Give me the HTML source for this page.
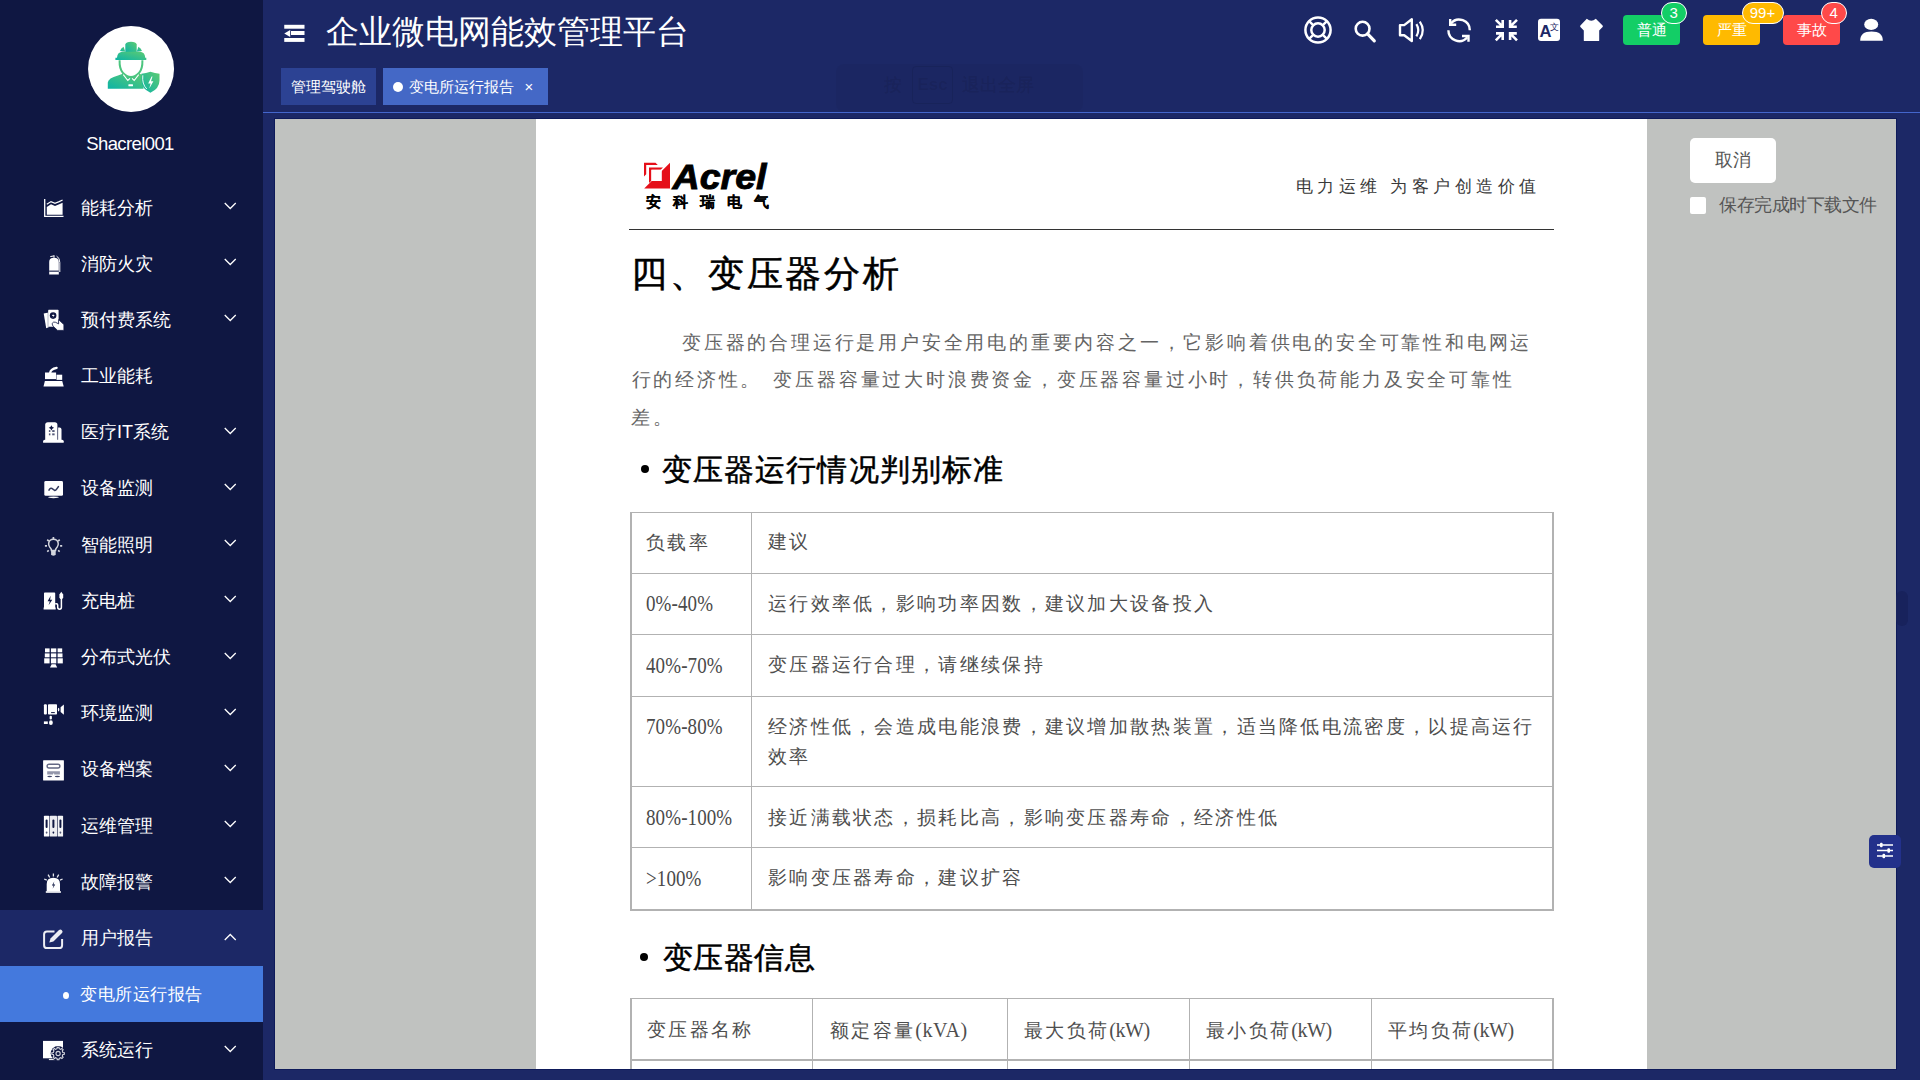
<!DOCTYPE html>
<html><head><meta charset="utf-8">
<style>
*{margin:0;padding:0;box-sizing:border-box}
html,body{width:1920px;height:1080px;overflow:hidden;background:#1c2866;font-family:"Liberation Sans",sans-serif}
.abs{position:absolute}
#side{position:absolute;left:0;top:0;width:263px;height:1080px;background:#0f1742}
#avatar{left:88px;top:26px;width:86px;height:86px;border-radius:50%;background:#fff}
#uname{left:-1.5px;top:133.5px;width:263px;text-align:center;color:#fff;font-size:18.5px;letter-spacing:-0.6px;line-height:20px}
.mi{position:absolute;left:0;width:263px;height:56px;color:#fff;font-size:18px}
.mi .t{position:absolute;left:81px;top:0;line-height:56px;white-space:nowrap}
.mi .ic{position:absolute;left:44px;top:19.5px;width:20px;height:18px;overflow:visible}
.mi .ch{position:absolute;left:224px;top:22.6px;width:12.5px;height:8px}
.mi.act{background:#1c2866}
.mi.sub{background:#4479dd}
.mi .dot{position:absolute;left:63.3px;top:25.8px;width:5.9px;height:7px;border-radius:50%;background:#fff}
.mi.sub .t{font-size:17px;letter-spacing:0.55px;top:0.8px}
#header{left:263px;top:0;width:1657px;height:112px;background:#1c2866}
#hline{left:263px;top:112px;width:1657px;height:1px;background:#4466cc}
#title{left:326px;top:8px;color:#fff;font-size:33px;line-height:48px;white-space:nowrap}
.tab{position:absolute;top:68px;height:37px;color:#fff;font-size:15px;line-height:37px;white-space:nowrap}
#frame{left:274px;top:118px;width:1623px;height:952px;background:#0e1a5a}
#gray{left:275px;top:119px;width:1621px;height:950px;background:#c0c2c0}
#page{left:536px;top:119px;width:1111px;height:950px;background:#fff;overflow:hidden}
.doc{font-family:"Liberation Serif",serif;color:#222}
.tx{position:absolute;white-space:nowrap;line-height:1}
.asc{letter-spacing:0.6px;font-size:20px}
.asc.kw{letter-spacing:-0.4px}
.btn{position:absolute;height:30px;top:15px;border-radius:4px;color:#fff;font-size:15px;line-height:30px;text-align:center}
.badge{position:absolute;top:2px;height:21.5px;border-radius:11px;border:1px solid #fff;color:#fff;font-size:15px;line-height:19.5px;text-align:center}
</style></head><body>
<div id="side">
  
  <div id="uname" class="abs">Shacrel001</div>
<div class="mi" style="top:179.50px"><svg class="ic" viewBox="0 0 20 18"><path d="M0.7 0V17.3H19.5" stroke="#fff" stroke-width="1.3" fill="none"/><path d="M2.8 5.2L7 2.6L11 4.3L15.2 2.6L18.6 1" stroke="#fff" stroke-width="1.2" fill="none"/><path d="M2.8 15.8V8L7 5.3L11 7L15.2 5.3L18.6 3.8V15.8Z" fill="#fff"/></svg><span class="t">能耗分析</span><svg class="ch" viewBox="0 0 12 8"><path d="M0.5 1L6 6.5L11.5 1" stroke="#fff" stroke-width="1.3" fill="none"/></svg></div>
<div class="mi" style="top:235.69px"><svg class="ic" viewBox="0 0 20 18"><path d="M5.2 7Q5.2 2.8 10 2.8Q14.8 2.8 14.8 7V19.6H5.2Z" fill="#fff"/><rect x="5.2" y="15.6" width="9.6" height="1.1" fill="#0f1742"/><path d="M10 2.8V0.6M10.4 0.8L6.3 1.6M12.6 1.2Q15.8 2.6 15.8 7.5V17" stroke="#fff" stroke-width="1" fill="none"/></svg><span class="t">消防火灾</span><svg class="ch" viewBox="0 0 12 8"><path d="M0.5 1L6 6.5L11.5 1" stroke="#fff" stroke-width="1.3" fill="none"/></svg></div>
<div class="mi" style="top:291.88px"><svg class="ic" viewBox="0 0 20 18"><path d="M-0.3 2.6L4.6 1.6V16.2L2.2 17.3Z" fill="#fff"/><rect x="4" y="-1.3" width="10.6" height="17" rx="0.8" fill="#fff"/><path d="M4 -1.3V15.7" stroke="#0f1742" stroke-width="0.6" opacity="0.5"/><circle cx="9.1" cy="4.6" r="3.3" fill="#0f1742"/><path d="M9.8 2.3L7.8 5.1H9.4L8.5 7.1L10.7 4.1H9.1Z" fill="#fff"/><path d="M8 12.6Q9.6 10.2 11.6 11.3L14.6 12.9V8.6L19.9 13.6V19.4H13.6L9 15.2Z" fill="#fff" stroke="#0f1742" stroke-width="0.8"/></svg><span class="t">预付费系统</span><svg class="ch" viewBox="0 0 12 8"><path d="M0.5 1L6 6.5L11.5 1" stroke="#fff" stroke-width="1.3" fill="none"/></svg></div>
<div class="mi" style="top:348.07px"><svg class="ic" viewBox="0 0 20 18"><path d="M6.2 4.6Q6.6 1 12.6 -0.2" stroke="#fff" stroke-width="2.3" stroke-linecap="round" fill="none"/><rect x="1" y="4.5" width="11.1" height="6.6" fill="#fff"/><rect x="12.5" y="6.7" width="5.7" height="5.2" fill="#fff"/><path d="M0.9 13.1H18.2L19.7 18.4H-0.5Z" fill="#fff"/></svg><span class="t">工业能耗</span></div>
<div class="mi" style="top:404.26px"><svg class="ic" viewBox="0 0 20 18"><path d="M1.2 16.4V0.8Q1.2 -1.8 3.8 -1.8H10.8Q13.4 -1.8 13.4 0.8V16.4Z" fill="#fff"/><path d="M14.1 16.4V3.5H15.6Q17.5 3.5 17.5 5.4V16.4Z" fill="#fff"/><path d="M-0.9 17.2Q-0.9 15.7 0.8 15.7H18.1Q19.7 15.7 19.7 17.2V18.8H-0.9Z" fill="#fff"/><path d="M7.4 1.2L8.4 2.9L10.1 3.8L8.4 4.7L7.4 6.4L6.4 4.7L4.7 3.8L6.4 2.9Z" fill="#0f1742"/><g fill="#0f1742" opacity="0.7"><rect x="4.9" y="6.1" width="1.5" height="1.9"/><rect x="8.2" y="6.1" width="2.4" height="1.9"/><rect x="4.9" y="9.4" width="1.5" height="1.9"/><rect x="8.2" y="9.4" width="2.4" height="1.9"/></g></svg><span class="t">医疗IT系统</span><svg class="ch" viewBox="0 0 12 8"><path d="M0.5 1L6 6.5L11.5 1" stroke="#fff" stroke-width="1.3" fill="none"/></svg></div>
<div class="mi" style="top:460.45px"><svg class="ic" viewBox="0 0 20 18"><rect x="0.3" y="1" width="18.7" height="14.8" rx="1.4" fill="#fff"/><ellipse cx="9.5" cy="17.35" rx="5.4" ry="0.8" fill="#fff"/><path d="M5 10.1Q6.5 7.6 7.8 8.4L10.6 10.4Q11.8 10.8 14.4 6.6" stroke="#0f1742" stroke-width="1.6" stroke-linecap="round" fill="none" opacity="0.85"/></svg><span class="t">设备监测</span><svg class="ch" viewBox="0 0 12 8"><path d="M0.5 1L6 6.5L11.5 1" stroke="#fff" stroke-width="1.3" fill="none"/></svg></div>
<div class="mi" style="top:516.64px"><svg class="ic" viewBox="0 0 20 18"><g opacity="0.82"><path d="M7.4 14.6Q7.4 12.8 5.7 11Q4.3 9.4 4.7 7.2Q5.4 3.3 9.45 3.3Q13.5 3.3 14.2 7.2Q14.6 9.4 13.2 11Q11.5 12.8 11.5 14.6Z" stroke="#fff" stroke-width="1.5" fill="none"/><path d="M7.1 15H11.7V18.3Q11.7 19.7 9.4 19.7Q7.1 19.7 7.1 18.3Z" fill="#fff"/><path d="M9.4 0.9V3M3.2 3.7L4.8 5.2M15.7 3.7L14.1 5.2M0.9 9.9H3M16.1 9.9H18.2M3.2 15.6L4.8 14.4M15.7 15.6L14.1 14.4" stroke="#fff" stroke-width="1.7"/></g></svg><span class="t">智能照明</span><svg class="ch" viewBox="0 0 12 8"><path d="M0.5 1L6 6.5L11.5 1" stroke="#fff" stroke-width="1.3" fill="none"/></svg></div>
<div class="mi" style="top:572.83px"><svg class="ic" viewBox="0 0 20 18"><path d="M0 1.3Q0 0.5 0.8 0.5H10.4Q11.2 0.5 11.2 1.3V15.6H11.7V17.5H-0.4V15.6H0Z" fill="#fff"/><path d="M6.7 3.8L3.6 9.2H5.8L4.6 13.2L8.3 7.7H6.1Z" fill="#0f1742"/><path d="M11.2 11.7H12.5Q13.7 11.7 13.7 13V15.3Q13.7 17.2 15.6 17.2Q17.4 17.2 17.4 15.3V6.5" stroke="#fff" stroke-width="1.5" fill="none"/><path d="M17.3 -0.2L19.2 2.6V5.8L18.2 7H16.4L15.4 5.8V2.6Z" fill="#fff"/></svg><span class="t">充电桩</span><svg class="ch" viewBox="0 0 12 8"><path d="M0.5 1L6 6.5L11.5 1" stroke="#fff" stroke-width="1.3" fill="none"/></svg></div>
<div class="mi" style="top:629.02px"><svg class="ic" viewBox="0 0 20 18"><g fill="#fff"><rect x="1" y="-0.6" width="4.6" height="3.9"/><rect x="6.9" y="-0.6" width="5.4" height="3.9"/><rect x="13.6" y="-0.6" width="4.6" height="3.9"/><rect x="0.8" y="4.4" width="4.8" height="3.9"/><rect x="6.9" y="4.4" width="5.4" height="3.9"/><rect x="13.6" y="4.4" width="4.9" height="3.9"/><rect x="0.2" y="9.3" width="5.4" height="5.1"/><rect x="6.9" y="9.3" width="5.4" height="5.1"/><rect x="13.6" y="9.3" width="5.2" height="5.1"/><path d="M7.6 15.3H11.6L13.2 18.5H6Z"/></g></svg><span class="t">分布式光伏</span><svg class="ch" viewBox="0 0 12 8"><path d="M0.5 1L6 6.5L11.5 1" stroke="#fff" stroke-width="1.3" fill="none"/></svg></div>
<div class="mi" style="top:685.21px"><svg class="ic" viewBox="0 0 20 18"><rect x="-0.1" y="-0.8" width="3" height="10.4" rx="1" fill="#fff"/><rect x="4" y="-0.8" width="9" height="10.4" rx="0.8" fill="#fff"/><rect x="7.1" y="7.1" width="3.7" height="1" fill="#0f1742"/><ellipse cx="14.6" cy="4.6" rx="0.7" ry="1.9" fill="#fff"/><path d="M16.6 2.2L19.9 -0.6V9.8L16.6 7Z" fill="#fff"/><rect x="5.6" y="10.7" width="2.3" height="3.7" rx="1" fill="#fff"/><ellipse cx="6.9" cy="17.7" rx="1.9" ry="2.4" fill="#fff"/><rect x="-0.1" y="16.4" width="3.9" height="2.6" fill="#fff"/></svg><span class="t">环境监测</span><svg class="ch" viewBox="0 0 12 8"><path d="M0.5 1L6 6.5L11.5 1" stroke="#fff" stroke-width="1.3" fill="none"/></svg></div>
<div class="mi" style="top:741.40px"><svg class="ic" viewBox="0 0 20 18"><rect x="-0.9" y="-0.8" width="20.8" height="20.4" rx="0.6" fill="#fff"/><rect x="3.1" y="3.2" width="12.8" height="3.8" rx="1.9" fill="none" stroke="#0f1742" stroke-width="1.4" opacity="0.65"/><path d="M3.2 10.3H15.9V13.6H10.2V12.4H9V13.6H3.2Z" fill="#0f1742" opacity="0.45"/><ellipse cx="5.7" cy="15.5" rx="2.4" ry="0.7" fill="#0f1742" opacity="0.8"/><ellipse cx="13.4" cy="15.5" rx="2.6" ry="0.7" fill="#0f1742" opacity="0.8"/></svg><span class="t">设备档案</span><svg class="ch" viewBox="0 0 12 8"><path d="M0.5 1L6 6.5L11.5 1" stroke="#fff" stroke-width="1.3" fill="none"/></svg></div>
<div class="mi" style="top:797.59px"><svg class="ic" viewBox="0 0 20 18"><rect x="-0.1" y="-1.2" width="5.4" height="20.8" rx="0.7" fill="#fff"/><rect x="5.8" y="-1.2" width="7.2" height="20.8" rx="0.7" fill="#fff" opacity="0.92"/><rect x="13.6" y="-1.2" width="5.5" height="20.8" rx="0.7" fill="#fff" opacity="0.95"/><g fill="#0f1742"><rect x="1.6" y="2.6" width="2" height="8.5" rx="1"/><rect x="8.4" y="2.6" width="2" height="8.5" rx="1"/><rect x="15.4" y="2.6" width="2" height="8.5" rx="1"/><ellipse cx="2.6" cy="15.6" rx="0.9" ry="1.1" opacity="0.7"/><ellipse cx="9.4" cy="15.6" rx="0.9" ry="1.1"/><ellipse cx="16.4" cy="15.6" rx="0.9" ry="1.1" opacity="0.7"/></g></svg><span class="t">运维管理</span><svg class="ch" viewBox="0 0 12 8"><path d="M0.5 1L6 6.5L11.5 1" stroke="#fff" stroke-width="1.3" fill="none"/></svg></div>
<div class="mi" style="top:853.78px"><svg class="ic" viewBox="0 0 20 18"><path d="M2.7 18.5V11Q2.7 4.7 9.35 4.7Q16 4.7 16 11V18.5Z" fill="#fff"/><rect x="1.8" y="18.2" width="15.1" height="1.6" fill="#fff"/><path d="M10.3 8.6L7.9 12.6H9.6L8.6 15.8L11.2 11.5H9.5Z" fill="#0f1742"/><path d="M9.4 0.4V3.4M4.1 1.6L5.7 4.5M14.7 1.6L13.1 4.5M0.2 6L2.8 7.1M18.6 6L16 7.1" stroke="#fff" stroke-width="1.3" opacity="0.9"/></svg><span class="t">故障报警</span><svg class="ch" viewBox="0 0 12 8"><path d="M0.5 1L6 6.5L11.5 1" stroke="#fff" stroke-width="1.3" fill="none"/></svg></div>
<div class="mi act" style="top:909.97px"><svg class="ic" viewBox="0 0 20 18"><path d="M10.5 2.4H3Q0.1 2.4 0.1 5.3V16.2Q0.1 19.1 3 19.1H15.2Q18.1 19.1 18.1 16.2V10" stroke="#fff" stroke-width="2" fill="none" opacity="0.92"/><path d="M5.3 13.6L6.5 9.6L15 1.1Q16.4 -0.2 17.9 1.2Q19.3 2.6 18 4L9.4 12.5Z" fill="#fff" opacity="0.92"/></svg><span class="t">用户报告</span><svg class="ch" viewBox="0 0 12 8"><path d="M0.5 7L6 1.5L11.5 7" stroke="#fff" stroke-width="1.3" fill="none"/></svg></div>
<div class="mi sub" style="top:966.16px"><span class="dot"></span><span class="t" style="left:80px">变电所运行报告</span></div>
<div class="mi" style="top:1022.35px"><svg class="ic" viewBox="0 0 20 18"><rect x="-1" y="-1.1" width="20" height="17.4" fill="#fff"/><rect x="4.9" y="16.9" width="7.4" height="1.2" fill="#fff" opacity="0.9"/><circle cx="14.1" cy="11.5" r="7.4" fill="#0f1742"/><path d="M18.88 10.43 L20.34 10.62 L20.34 12.38 L18.88 12.57 L18.24 14.13 L19.13 15.29 L17.89 16.53 L16.73 15.64 L15.17 16.28 L14.98 17.74 L13.22 17.74 L13.03 16.28 L11.47 15.64 L10.31 16.53 L9.07 15.29 L9.96 14.13 L9.32 12.57 L7.86 12.38 L7.86 10.62 L9.32 10.43 L9.96 8.87 L9.07 7.71 L10.31 6.47 L11.47 7.36 L13.03 6.72 L13.22 5.26 L14.98 5.26 L15.17 6.72 L16.73 7.36 L17.89 6.47 L19.13 7.71 L18.24 8.87Z" fill="none" stroke="#fff" stroke-width="1.1" opacity="0.85"/><circle cx="14.1" cy="11.5" r="2.1" fill="none" stroke="#fff" stroke-width="1.1" opacity="0.8"/></svg><span class="t">系统运行</span><svg class="ch" viewBox="0 0 12 8"><path d="M0.5 1L6 6.5L11.5 1" stroke="#fff" stroke-width="1.3" fill="none"/></svg></div>
</div>
<div id="header" class="abs"></div>
<div id="hline" class="abs"></div>
<div id="title" class="abs">企业微电网能效管理平台</div>
<div class="tab" style="left:281px;width:95px;background:#2c4293;padding-left:10px">管理驾驶舱</div>
<div class="tab" style="left:383px;width:165px;background:#4468c6;padding-left:26px">变电所运行报告<span style="position:absolute;left:10px;top:13.8px;width:10.3px;height:10.3px;border-radius:50%;background:#fff"></span><span style="position:absolute;left:141.5px;top:0.3px;font-size:15px">×</span></div>
<svg class="abs" style="left:278px;top:18px" width="32" height="30" viewBox="278 18 32 30">
<rect x="284.25" y="24.8" width="20.25" height="3.9" fill="#fff"/>
<path d="M284.25 33.4L290.2 29.9V36.9Z" fill="#fff"/>
<rect x="291" y="31" width="13.5" height="4" fill="#fff"/>
<rect x="284.25" y="38" width="20.25" height="3.9" fill="#fff"/>
</svg>
<svg class="abs" style="left:1290px;top:0" width="630" height="60" viewBox="1290 0 630 60">
<g stroke="#fff" fill="none">
 <circle cx="1318" cy="30" r="12.6" stroke-width="2.5"/>
 <circle cx="1318" cy="30" r="6.7" stroke-width="2.5"/>
 <path d="M1309.6 21.6L1313.2 25.2M1326.4 21.6L1322.8 25.2M1309.6 38.4L1313.2 34.8M1326.4 38.4L1322.8 34.8" stroke-width="2.4"/>
 <circle cx="1362.6" cy="28.7" r="6.9" stroke-width="2.6"/>
 <path d="M1367.6 33.8L1374.3 40.8" stroke-width="3.2" stroke-linecap="round"/>
 <path d="M1400 25.1H1404.2L1411.8 19.3V41L1404.2 35.2H1400Z" stroke-width="2.4" stroke-linejoin="round"/>
 <path d="M1416.4 24.2Q1420.2 30.2 1416.4 36.4" stroke-width="2.2"/>
 <path d="M1419.8 21.6Q1425.8 30.2 1419.8 39.2" stroke-width="2.2"/>
 <path d="M1450.9 23.4A10.7 10.7 0 0 1 1469.8 30.3" stroke-width="2.4"/>
 <path d="M1467.3 37.2A10.7 10.7 0 0 1 1448.4 30.3" stroke-width="2.4"/>
 <path d="M1450.2 19V24.8H1456.2" stroke-width="2.4"/>
 <path d="M1462 36H1468.5V41.7" stroke-width="2.4"/>
 <g stroke-width="2.6">
 <path d="M1495.8 19.8L1502.2 26.2M1496 26.7H1502.7V20"/>
 <path d="M1517 19.8L1510.6 26.2M1516.8 26.7H1510.1V20"/>
 <path d="M1495.8 40.3L1502.2 33.9M1496 33.4H1502.7V40.1"/>
 <path d="M1517 40.3L1510.6 33.9M1516.8 33.4H1510.1V40.1"/>
 </g>
</g>
<rect x="1538" y="18.8" width="22" height="22.2" rx="3" fill="#fff"/>
<text x="1539.4" y="37" font-family="Liberation Sans" font-weight="bold" font-size="16.6" fill="#1c2866">A</text>
<text x="1550.3" y="30.4" font-size="8.5" fill="#1c2866">文</text>
<path d="M1586.8 18.8Q1591.3 22.8 1595.8 18.8L1602.6 25.5Q1603.2 26.3 1602.6 27L1599.2 30.6V40.4Q1599.2 41 1598.6 41H1584.4Q1583.8 41 1583.8 40.4V30.6L1580.4 27Q1579.8 26.3 1580.4 25.5Z" fill="#fff"/>
<ellipse cx="1871.2" cy="24.4" rx="7" ry="5.6" fill="#fff"/>
<path d="M1860.2 40.8Q1860 31.4 1871.5 31.4Q1883 31.4 1882.8 40.8Z" fill="#fff"/>
</svg>
<div class="btn" style="left:1623px;width:57px;background:#13ce66">普通</div>
<div class="badge" style="left:1661px;width:25.5px;background:#13ce66">3</div>
<div class="btn" style="left:1703px;width:57px;background:#ffba00">严重</div>
<div class="badge" style="left:1741.5px;width:42px;background:#ffba00">99+</div>
<div class="btn" style="left:1783px;width:57px;background:#ff4949">事故</div>
<div class="badge" style="left:1821px;width:25.5px;background:#ff4949">4</div>
<div class="abs" style="left:836px;top:64px;width:247px;height:48px;border-radius:8px;background:rgba(0,0,0,0.035)"></div>
<div class="abs" style="left:884px;top:70px;font-size:18px;line-height:30px;font-weight:bold;color:rgba(0,0,0,0.07);white-space:nowrap">按</div>
<div class="abs" style="left:912px;top:66px;width:41px;height:38px;border:1px solid rgba(0,0,0,0.08);border-radius:4px;font-size:17px;line-height:36px;text-align:center;font-weight:bold;color:rgba(0,0,0,0.07)">Esc</div>
<div class="abs" style="left:962px;top:70px;font-size:17.5px;line-height:30px;font-weight:bold;color:rgba(0,0,0,0.07);white-space:nowrap">退出全屏</div>

<div id="frame" class="abs"></div>
<div id="gray" class="abs"></div>
<div id="page" class="abs doc"><div class="abs" style="left:-536px;top:-119px;width:1920px;height:1080px">
<svg class="abs" style="left:640px;top:158px" width="135" height="55" viewBox="640 158 135 55">
<g fill="#e50f19">
<path d="M670 162.7V188.5H644.2Z"/>
<path d="M644 162.7H655.5L657.8 164.9H646.2V174.3L644 176.5Z"/>
<path d="M649 167.4H663L660.6 169.8H651.4V180.7L649 183Z"/>
</g>
<rect x="651.4" y="169.8" width="10.4" height="11.2" fill="#fff"/>
<path d="M651.4 181H661.8V169.8" fill="none" stroke="#e50f19" stroke-width="0"/>
<text x="672.5" y="188.5" font-family="Liberation Sans" font-weight="bold" font-style="italic" font-size="35.5" textLength="94" lengthAdjust="spacingAndGlyphs" fill="#000" stroke="#000" stroke-width="0.9">Acrel</text>
<text x="645.5" y="206.5" font-weight="bold" font-size="15" fill="#000" stroke="#000" stroke-width="0.15" letter-spacing="12.2">安科瑞电气</text>
</svg>
<div class="tx" style="left:1296px;top:178px;font-size:17px;letter-spacing:4.45px;color:#3a3a3a;font-weight:normal;">电力运维 为客户创造价值</div>
<div class="abs" style="left:629px;top:228.5px;width:925px;height:1px;background:#333"></div>
<div class="tx" style="left:631px;top:255.5px;font-size:36px;letter-spacing:2.6px;color:#000;font-weight:normal;-webkit-text-stroke:0.55px #000">四、变压器分析</div>
<div class="tx" style="left:682px;top:332.8px;font-size:19px;letter-spacing:2.8px;color:#646464;font-weight:normal;">变压器的合理运行是用户安全用电的重要内容之一，它影响着供电的安全可靠性和电网运</div>
<div class="tx" style="left:631.5px;top:370.3px;font-size:19px;letter-spacing:2.8px;color:#646464;font-weight:normal;">行的经济性。<span style="display:inline-block;width:11px"></span>变压器容量过大时浪费资金，变压器容量过小时，转供负荷能力及安全可靠性</div>
<div class="tx" style="left:631px;top:407.6px;font-size:19px;letter-spacing:2.8px;color:#646464;font-weight:normal;">差。</div>
<div class="abs" style="left:640.5px;top:465px;width:8.3px;height:8.2px;border-radius:50%;background:#000"></div>
<div class="tx" style="left:662px;top:455px;font-size:30px;letter-spacing:1.1px;color:#000;font-weight:normal;-webkit-text-stroke:0.5px #000">变压器运行情况判别标准</div>
<div class="abs" style="left:629.5px;top:511.5px;width:924.5px;height:1.2px;background:#b2b2b2"></div>
<div class="abs" style="left:629.5px;top:572.5px;width:924.5px;height:1.2px;background:#b2b2b2"></div>
<div class="abs" style="left:629.5px;top:633.75px;width:924.5px;height:1.2px;background:#b2b2b2"></div>
<div class="abs" style="left:629.5px;top:695.5px;width:924.5px;height:1.2px;background:#b2b2b2"></div>
<div class="abs" style="left:629.5px;top:786.2px;width:924.5px;height:1.2px;background:#b2b2b2"></div>
<div class="abs" style="left:629.5px;top:847.1px;width:924.5px;height:1.2px;background:#b2b2b2"></div>
<div class="abs" style="left:629.5px;top:908.5px;width:924.5px;height:2px;background:#b2b2b2"></div>
<div class="abs" style="left:629.5px;top:511.5px;width:2px;height:399.0px;background:#b2b2b2"></div>
<div class="abs" style="left:1552px;top:511.5px;width:2px;height:399.0px;background:#b2b2b2"></div>
<div class="abs" style="left:751.2px;top:511.5px;width:1.2px;height:397.0px;background:#b2b2b2"></div>
<div class="tx" style="left:646px;top:532.7px;font-size:19px;letter-spacing:2.3px;color:#4e4e4e;font-weight:normal;">负载率</div>
<div class="tx" style="left:768px;top:532.7px;font-size:19px;letter-spacing:2.3px;color:#4e4e4e;font-weight:normal;line-height:30px;top:527.2px">建议</div>
<div class="tx" style="left:646px;top:593.9px;font-size:19px;letter-spacing:0.1px;color:#4a4a4a;font-weight:normal;transform:scaleY(1.16);transform-origin:0 60%">0%-40%</div>
<div class="tx" style="left:768px;top:594.1px;font-size:19px;letter-spacing:2.3px;color:#4e4e4e;font-weight:normal;line-height:30px;top:588.6px">运行效率低，影响功率因数，建议加大设备投入</div>
<div class="tx" style="left:646px;top:655.5px;font-size:19px;letter-spacing:0.1px;color:#4a4a4a;font-weight:normal;transform:scaleY(1.16);transform-origin:0 60%">40%-70%</div>
<div class="tx" style="left:768px;top:655.7px;font-size:19px;letter-spacing:2.3px;color:#4e4e4e;font-weight:normal;line-height:30px;top:650.2px">变压器运行合理，请继续保持</div>
<div class="tx" style="left:646px;top:717.1px;font-size:19px;letter-spacing:0.1px;color:#4a4a4a;font-weight:normal;transform:scaleY(1.16);transform-origin:0 60%">70%-80%</div>
<div class="tx" style="left:768px;top:717.3000000000001px;font-size:19px;letter-spacing:2.3px;color:#4e4e4e;font-weight:normal;line-height:30px;top:711.8px">经济性低，会造成电能浪费，建议增加散热装置，适当降低电流密度，以提高运行<br>效率</div>
<div class="tx" style="left:646px;top:808.1px;font-size:19px;letter-spacing:0.1px;color:#4a4a4a;font-weight:normal;transform:scaleY(1.16);transform-origin:0 60%">80%-100%</div>
<div class="tx" style="left:768px;top:808.3000000000001px;font-size:19px;letter-spacing:2.3px;color:#4e4e4e;font-weight:normal;line-height:30px;top:802.8px">接近满载状态，损耗比高，影响变压器寿命，经济性低</div>
<div class="tx" style="left:646px;top:868.7px;font-size:19px;letter-spacing:0.1px;color:#4a4a4a;font-weight:normal;transform:scaleY(1.16);transform-origin:0 60%">>100%</div>
<div class="tx" style="left:768px;top:868.9000000000001px;font-size:19px;letter-spacing:2.3px;color:#4e4e4e;font-weight:normal;line-height:30px;top:863.4px">影响变压器寿命，建议扩容</div>
<div class="abs" style="left:640.2px;top:952.5px;width:8.2px;height:8.2px;border-radius:50%;background:#000"></div>
<div class="tx" style="left:662.5px;top:942.5px;font-size:30px;letter-spacing:0.6px;color:#000;font-weight:normal;-webkit-text-stroke:0.5px #000">变压器信息</div>
<div class="abs" style="left:629.5px;top:997.5px;width:924.5px;height:1.2px;background:#b2b2b2"></div>
<div class="abs" style="left:629.5px;top:1058.7px;width:924.5px;height:2px;background:#b2b2b2"></div>
<div class="abs" style="left:629.5px;top:997.5px;width:2px;height:80px;background:#b2b2b2"></div>
<div class="abs" style="left:1552px;top:997.5px;width:2px;height:80px;background:#b2b2b2"></div>
<div class="abs" style="left:812.2px;top:997.5px;width:1.3px;height:80px;background:#b2b2b2"></div>
<div class="abs" style="left:1007px;top:997.5px;width:1.3px;height:80px;background:#b2b2b2"></div>
<div class="abs" style="left:1189px;top:997.5px;width:1.3px;height:80px;background:#b2b2b2"></div>
<div class="abs" style="left:1371px;top:997.5px;width:1.3px;height:80px;background:#b2b2b2"></div>
<div class="tx" style="left:647px;top:1019.6000000000001px;font-size:19px;letter-spacing:2.3px;color:#4e4e4e;font-weight:normal;">变压器名称</div>
<div class="tx" style="left:830px;top:1019.6000000000001px;font-size:19px;letter-spacing:2.3px;color:#4e4e4e;font-weight:normal;">额定容量<span class="asc">(kVA)</span></div>
<div class="tx" style="left:1024px;top:1019.6000000000001px;font-size:19px;letter-spacing:2.3px;color:#4e4e4e;font-weight:normal;">最大负荷<span class="asc kw">(kW)</span></div>
<div class="tx" style="left:1206px;top:1019.6000000000001px;font-size:19px;letter-spacing:2.3px;color:#4e4e4e;font-weight:normal;">最小负荷<span class="asc kw">(kW)</span></div>
<div class="tx" style="left:1388px;top:1019.6000000000001px;font-size:19px;letter-spacing:2.3px;color:#4e4e4e;font-weight:normal;">平均负荷<span class="asc kw">(kW)</span></div>
</div></div>
<svg class="abs" style="left:85px;top:22px" width="93" height="93" viewBox="0 0 93 93">
<defs><linearGradient id="g1" x1="0" y1="1" x2="1" y2="0"><stop offset="0" stop-color="#0db3a6"/><stop offset="1" stop-color="#5dcb72"/></linearGradient></defs>
<circle cx="46.05" cy="46.9" r="43" fill="#fff"/>
<g fill="url(#g1)">
<path d="M40.3 22.5Q41 19.8 46 19.8Q51 19.8 51.7 22.5V30.5H40.3Z"/>
<path d="M35 29Q36 26 38.6 24.8L40.3 29.8Z"/>
<path d="M57 29Q56 26 53.4 24.8L51.7 29.8Z"/>
<path d="M32 35.8Q32.2 30.5 37 29.8H55.5Q60 30.5 60.2 35.8H61.3V38H30.4V35.8Z"/>
<path d="M22.8 66.8V60.5Q23.2 56 33 53.4L37.8 51.8Q46 57.5 54.2 51.8L58.5 53V66.8Z"/>
<path d="M56.4 51.8Q61 51.5 65.4 49.8Q70 51.5 74.5 51.8V58.5Q74.5 66.5 65.4 70.8Q56.4 66.5 56.4 58.5Z"/>
</g>
<ellipse cx="46" cy="46.2" rx="12.1" ry="8.6" fill="none" stroke="url(#g1)" stroke-width="0"/>
<path d="M34.6 38.3Q34.3 47 38 51Q41.5 55 46 55Q50.5 55 54 51Q57.7 47 57.4 38.3" fill="none" stroke="#4cc57f" stroke-width="2"/>
<path d="M38.3 52.6L42.8 58.5L45 56.3M53.7 52.6L49.2 58.5L47 56.3" fill="none" stroke="#fff" stroke-width="1.1"/>
<rect x="43.4" y="62.3" width="4.6" height="2" rx="0.5" fill="#fff"/>
<path d="M57.8 53.3Q56.8 62 61.8 67" fill="none" stroke="#fff" stroke-width="0.9"/>
<path d="M66.6 54.5L63.2 61.5H65.6L64.3 66.5L68.4 59.3H66L67.5 54.5Z" fill="#fff"/>
</svg>
<div class="abs" style="left:1689.5px;top:138px;width:86px;height:44.5px;background:#fff;border-radius:5px;color:#555;font-size:17.5px;line-height:44px;text-align:center">取消</div>
<div class="abs" style="left:1689.5px;top:197.3px;width:16px;height:16.4px;background:#fff;border-radius:2px"></div>
<div class="abs" style="left:1719px;top:193px;color:#555;font-size:17.5px;letter-spacing:-0.45px;line-height:24px;white-space:nowrap">保存完成时下载文件</div>
<div class="abs" style="left:1896px;top:591px;width:12px;height:35px;border-radius:6px;background:#18225c"></div>
<div class="abs" style="left:1869px;top:835px;width:32px;height:33px;border-radius:5px;background:#23318b"></div>
<svg class="abs" style="left:1869px;top:835px" width="32" height="33" viewBox="1869 835 32 33">
<g stroke="#fff" stroke-width="1.5"><path d="M1877 845H1893M1877 850.5H1893M1877 856H1893"/></g>
<g fill="#fff"><rect x="1880" y="842.8" width="2.6" height="4.4" rx="1"/><rect x="1887.4" y="848.3" width="2.6" height="4.4" rx="1"/><rect x="1882.5" y="853.8" width="2.6" height="4.4" rx="1"/></g>
</svg>

</body></html>
